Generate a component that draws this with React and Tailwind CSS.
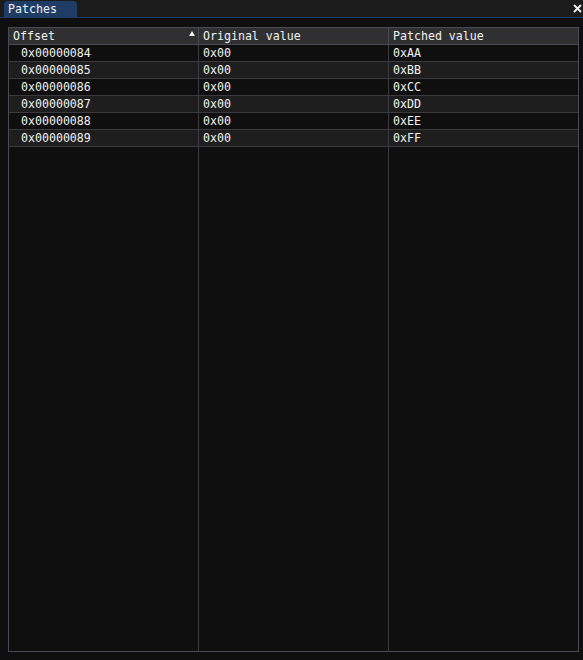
import React from 'react'

const ROWS = [
  { offset: '0x00000084', orig: '0x00', patched: '0xAA' },
  { offset: '0x00000085', orig: '0x00', patched: '0xBB' },
  { offset: '0x00000086', orig: '0x00', patched: '0xCC' },
  { offset: '0x00000087', orig: '0x00', patched: '0xDD' },
  { offset: '0x00000088', orig: '0x00', patched: '0xEE' },
  { offset: '0x00000089', orig: '0x00', patched: '0xFF' },
]

const mono = { fontFamily: '"DejaVu Sans Mono", "Liberation Mono", monospace' }

export default function App() {
  return (
    <div className="w-[583px] h-[660px] bg-[#0f0f0f] flex flex-col text-[#f2f2f2] text-[11.6px] leading-[16px]" style={mono}>

      {/* Tab bar */}
      <div className="h-[17px] bg-[#1b1b1b] flex items-end justify-between pl-[4px] pr-[1px] shrink-0">
        <div className="w-[73px] h-[16px] bg-[#1f3d64] rounded-t-[4px] pl-[4px] leading-[16px]">Patches</div>
        <svg width="9" height="9" viewBox="0 0 9 9" className="mb-[4px]">
          <path d="M1 1 L8 8 M8 1 L1 8" stroke="#f2f2f2" strokeWidth="1.8" />
        </svg>
      </div>
      <div className="h-[1px] bg-[#1f3d64] shrink-0" />

      {/* Table */}
      <div className="flex-1 flex flex-col pt-[9px] pl-[8px] pr-[4px] pb-[8px] min-h-0">
        <div className="flex-1 flex flex-col border border-[#4a4a52]">
          <div className="grid grid-cols-[190px_190px_1fr] bg-[#303033] border-b border-[#4a4a52] h-[17px]">
            <div className="border-r border-[#4a4a52] pl-[4px] pr-[3px] flex justify-between items-start">
              <span>Offset</span>
              <svg width="6" height="5" viewBox="0 0 6 5" className="mt-[3px]">
                <path d="M3 0 L6 5 L0 5 Z" fill="#f2f2f2" />
              </svg>
            </div>
            <div className="border-r border-[#4a4a52] pl-[4px]">Original value</div>
            <div className="pl-[4px]">Patched value</div>
          </div>

          {ROWS.map((r, i) => (
            <div
              key={r.offset}
              className={`grid grid-cols-[190px_190px_1fr] border-b border-[#3a3a3f] h-[17px] ${i % 2 ? 'bg-[#1e1e1e]' : 'bg-[#0f0f0f]'}`}
            >
              <div className="border-r border-[#3a3a3f] pl-[12px]">{r.offset}</div>
              <div className="border-r border-[#3a3a3f] pl-[4px]">{r.orig}</div>
              <div className="pl-[4px]">{r.patched}</div>
            </div>
          ))}

          <div className="flex-1 grid grid-cols-[190px_190px_1fr]">
            <div className="border-r border-[#3a3a3f]" />
            <div className="border-r border-[#3a3a3f]" />
            <div />
          </div>
        </div>
      </div>

    </div>
  )
}
